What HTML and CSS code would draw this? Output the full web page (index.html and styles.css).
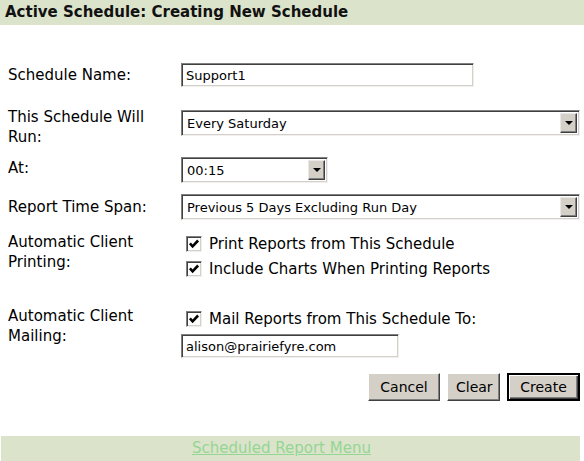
FILE: index.html
```html
<!DOCTYPE html>
<html lang="en">
<head>
    <title>Active Schedule</title>
    <link rel="stylesheet" href="styles.css">
</head>
<body>
    <div class="title">Active Schedule: Creating New Schedule</div>

    <form class="schedule-form">
        <div class="row row-name">
            <label>Schedule Name:</label>
            <div class="field"><input type="text" class="text name-input" value="Support1"></div>
        </div>
        <div class="row row-run">
            <label>This Schedule Will Run:</label>
            <div class="field">
                <div class="select wide"><span class="value">Every Saturday</span><span class="arrow"></span></div>
            </div>
        </div>
        <div class="row row-at">
            <label>At:</label>
            <div class="field">
                <div class="select short"><span class="value">00:15</span><span class="arrow"></span></div>
            </div>
        </div>
        <div class="row row-span">
            <label>Report Time Span:</label>
            <div class="field">
                <div class="select wide"><span class="value">Previous 5 Days Excluding Run Day</span><span class="arrow"></span></div>
            </div>
        </div>
        <div class="row row-print">
            <label>Automatic Client Printing:</label>
            <div class="field checks">
                <div class="check-line"><span class="check"><svg viewBox="0 0 12 12"><polyline points="2.5,5.5 4.8,8 9.5,3"/></svg></span>Print Reports from This Schedule</div>
                <div class="check-line"><span class="check"><svg viewBox="0 0 12 12"><polyline points="2.5,5.5 4.8,8 9.5,3"/></svg></span>Include Charts When Printing Reports</div>
            </div>
        </div>
        <div class="row row-mail">
            <label>Automatic Client Mailing:</label>
            <div class="field checks">
                <div class="check-line"><span class="check"><svg viewBox="0 0 12 12"><polyline points="2.5,5.5 4.8,8 9.5,3"/></svg></span>Mail Reports from This Schedule To:</div>
                <input type="text" class="text mail-input" value="alison@prairiefyre.com">
            </div>
        </div>
        <div class="buttons">
            <button type="button" class="btn cancel">Cancel</button>
            <button type="button" class="btn clear">Clear</button>
            <button type="button" class="btn create">Create</button>
        </div>
    </form>

    <div class="footer"><a href="#">Scheduled Report Menu</a></div>
</body>
</html>
```

FILE: styles.css
```css
body {
    margin: 0;
    font-family: "DejaVu Sans", Verdana, sans-serif;
    font-size: 15px;
    color: #000;
    background: #fff;
    width: 584px;
}

.title {
    height: 25px;
    line-height: 25px;
    padding-left: 5px;
    background-color: #dce3cb;
    font-weight: bold;
    font-size: 15px;
    color: #111;
}

.schedule-form {
    padding: 38px 4px 0 8px;
}

.row {
    display: grid;
    grid-template-columns: 173px 1fr;
    align-items: start;
}
.row label {
    line-height: 20px;
    padding-right: 6px;
}

.row-name { margin-bottom: 20px; }
.row-name label { padding-top: 2px; }
.row-run { margin-bottom: 10px; }
.row-run .field { padding-top: 3px; }
.row-at { margin-bottom: 11px; }
.row-at label { padding-top: 1px; }
.row-span { margin-bottom: 11px; }
.row-span label { padding-top: 3px; }
.row-print { margin-bottom: 25px; }
.row-print label { padding-top: 1px; }

/* classic sunken fields */
.text, .select {
    box-sizing: border-box;
    border: 1px solid;
    border-color: #808080 #f0f0f0 #f0f0f0 #808080;
    box-shadow: inset 1px 1px 0 #404040, inset -1px -1px 0 #d4d0c8;
    background: #fff;
    font-family: "DejaVu Sans", Verdana, sans-serif;
    font-size: 13px;
    color: #000;
}
.text {
    display: block;
    height: 24px;
    padding: 0 4px;
    outline: none;
}
.name-input { width: 293px; }
.mail-input { width: 218px; margin-top: 3px; }

.select {
    display: flex;
    align-items: center;
    height: 26px;
    padding: 2px;
}
.select.wide { width: 399px; }
.select.short { width: 147px; }
.select .value {
    flex: 1;
    padding-left: 3px;
    white-space: nowrap;
}
.select .arrow {
    position: relative;
    width: 17px;
    height: 20px;
    box-sizing: border-box;
    background: #d4d0c8;
    border: 1px solid;
    border-color: #e8e8e8 #404040 #404040 #e8e8e8;
    box-shadow: inset -1px -1px 0 #808080;
}
.select .arrow::after {
    content: "";
    position: absolute;
    left: 4px;
    top: 7px;
    border-left: 4px solid transparent;
    border-right: 4px solid transparent;
    border-top: 4px solid #000;
}

.checks {
    display: flex;
    flex-direction: column;
}
.check-line {
    display: flex;
    align-items: center;
    height: 25px;
    padding-left: 5px;
    white-space: nowrap;
}
.check {
    box-sizing: border-box;
    width: 16px;
    height: 16px;
    margin-right: 7px;
    background: #fff;
    border: 1px solid;
    border-color: #808080 #f0f0f0 #f0f0f0 #808080;
    box-shadow: inset 1px 1px 0 #404040, inset -1px -1px 0 #d4d0c8;
}
.check svg {
    display: block;
    width: 14px;
    height: 14px;
}
.check polyline {
    fill: none;
    stroke: #000;
    stroke-width: 2.2;
}

.buttons {
    display: flex;
    justify-content: flex-end;
    gap: 7px;
    margin-top: 15px;
}
.btn {
    height: 28px;
    box-sizing: border-box;
    padding: 0 8px;
    background: #d4d0c8;
    border: 1px solid;
    border-color: #fff #404040 #404040 #fff;
    box-shadow: inset -1px -1px 0 #808080;
    font-family: "DejaVu Sans", Verdana, sans-serif;
    font-size: 14px;
    color: #000;
}
.cancel { width: 72px; }
.clear { width: 53px; }
.create {
    width: 73px;
    border: 2px solid #000;
    box-shadow: inset 1px 1px 0 #fff, inset -1px -1px 0 #404040, inset -2px -2px 0 #808080;
}

.footer {
    margin: 35px 4px 0 1px;
    padding-right: 18px;
    height: 25px;
    line-height: 25px;
    background-color: #dce3cb;
    text-align: center;
    font-size: 15px;
}
.footer a {
    color: #94d694;
}
```
